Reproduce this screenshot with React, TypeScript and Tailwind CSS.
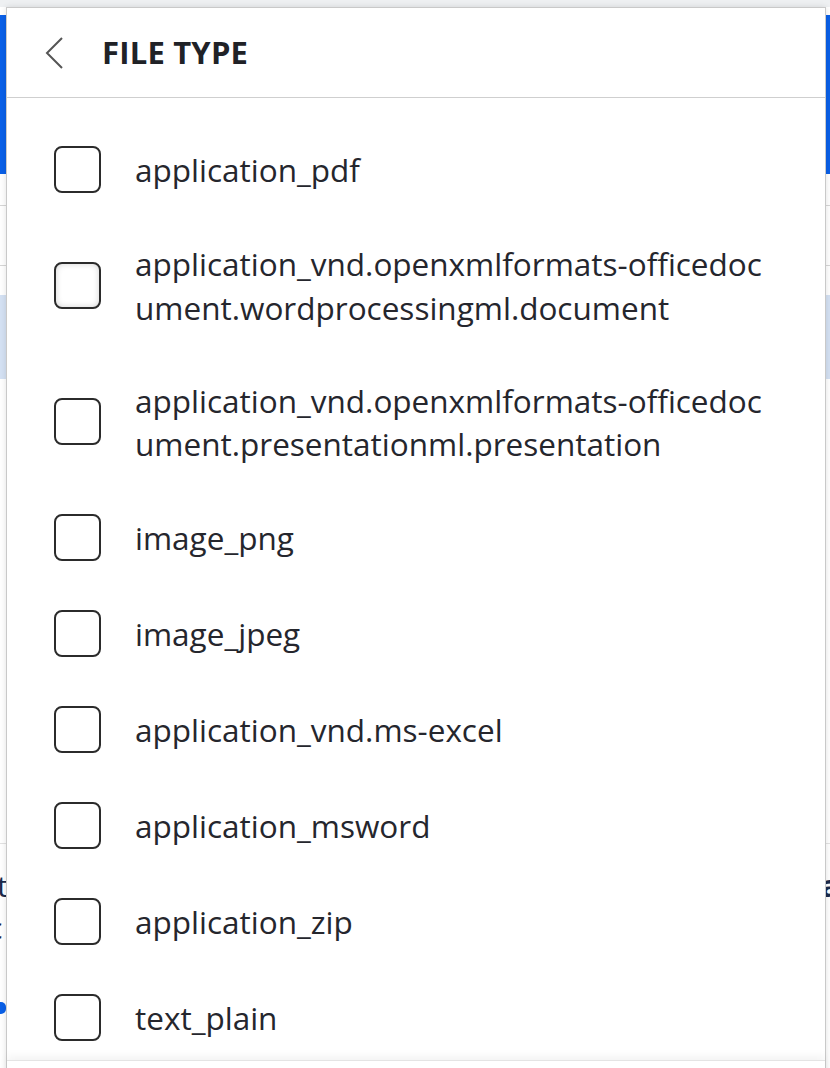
const fileTypes = [
  "application_pdf",
  "application_vnd.openxmlformats-officedocument.wordprocessingml.document",
  "application_vnd.openxmlformats-officedocument.presentationml.presentation",
  "image_png",
  "image_jpeg",
  "application_vnd.ms-excel",
  "application_msword",
  "application_zip",
  "text_plain",
];

const App = () => {
  return (
    <div className="relative w-[830px] h-[1068px] overflow-hidden bg-white font-['Open_Sans',sans-serif]">
      {/* page behind the drawer */}
      <div className="h-[7px] bg-[#eef0f2]" />
      <div className="h-[8px] bg-white" />
      <div className="h-[159px] bg-[#0a60e8]" />
      <div className="h-[32px] bg-white border-b border-[#d6d6d6]" />
      <div className="h-[60px] bg-white border-b border-[#d6d6d6]" />
      <div className="h-[29px] bg-white" />
      <div className="h-[84px] bg-[#d4e1f3]" />
      <div className="h-[465px] bg-white border-b border-[#e2e2e2]" />
      <div className="flex justify-between pt-[22px] text-[30px] leading-[40px] text-[#1b2a4a]">
        <span className="-ml-[3px]">t</span>
        <span className="-mr-[9px] font-bold">a</span>
      </div>
      <div className="flex justify-between text-[30px] leading-[44px] text-[#1b2a4a]">
        <span className="-ml-[12px]">c</span>
        <span className="-mr-[12px] font-bold">l</span>
      </div>
      <div className="flex pt-[52px]">
        <span className="-ml-[4px] w-[10px] h-[12px] rounded-full bg-[#0a60e8]" />
      </div>

      {/* drawer */}
      <div className="absolute left-[6px] top-[7px] w-[820px] h-[1070px] flex flex-col bg-white border border-[#c9c9c9] shadow-[0_0_6px_rgba(0,0,0,0.12)]">
        <div className="h-[90px] shrink-0 flex items-center border-b border-[#cfcfcf]">
          <svg width="20" height="32" viewBox="0 0 20 32" className="ml-[37px]" fill="none" stroke="#555" strokeWidth="2">
            <path d="M18 1 L3 16 L18 31" />
          </svg>
          <h2 className="ml-[38px] text-[31px] font-bold tracking-[0.2px] text-[#202227]">FILE TYPE</h2>
        </div>

        <div className="flex-1 overflow-hidden pt-[23px]">
          {fileTypes.map((t, i) => (
            <label key={t} className="flex items-center gap-[34px] px-[47px] py-[24.5px]">
              <span
                className={
                  i === 1
                    ? "shrink-0 w-[47px] h-[47px] rounded-[8px] border-2 border-[#2b2b2b] bg-white shadow-[inset_0_0_6px_rgba(0,0,0,0.18)]"
                    : "shrink-0 w-[47px] h-[47px] rounded-[8px] border-2 border-[#2b2b2b] bg-white"
                }
              />
              <span
                className={
                  i === 1
                    ? "flex-1 break-all text-[31.5px] leading-[44px] text-[#25262d]"
                    : "flex-1 break-all text-[31.5px] leading-[43px] text-[#25262d]"
                }
              >
                {t}
              </span>
            </label>
          ))}
        </div>

        <div className="h-[16px] shrink-0 bg-white border-t border-[#e4e4e4] shadow-[0_-4px_8px_rgba(0,0,0,0.05)]" />
      </div>
    </div>
  );
};

export default App;
